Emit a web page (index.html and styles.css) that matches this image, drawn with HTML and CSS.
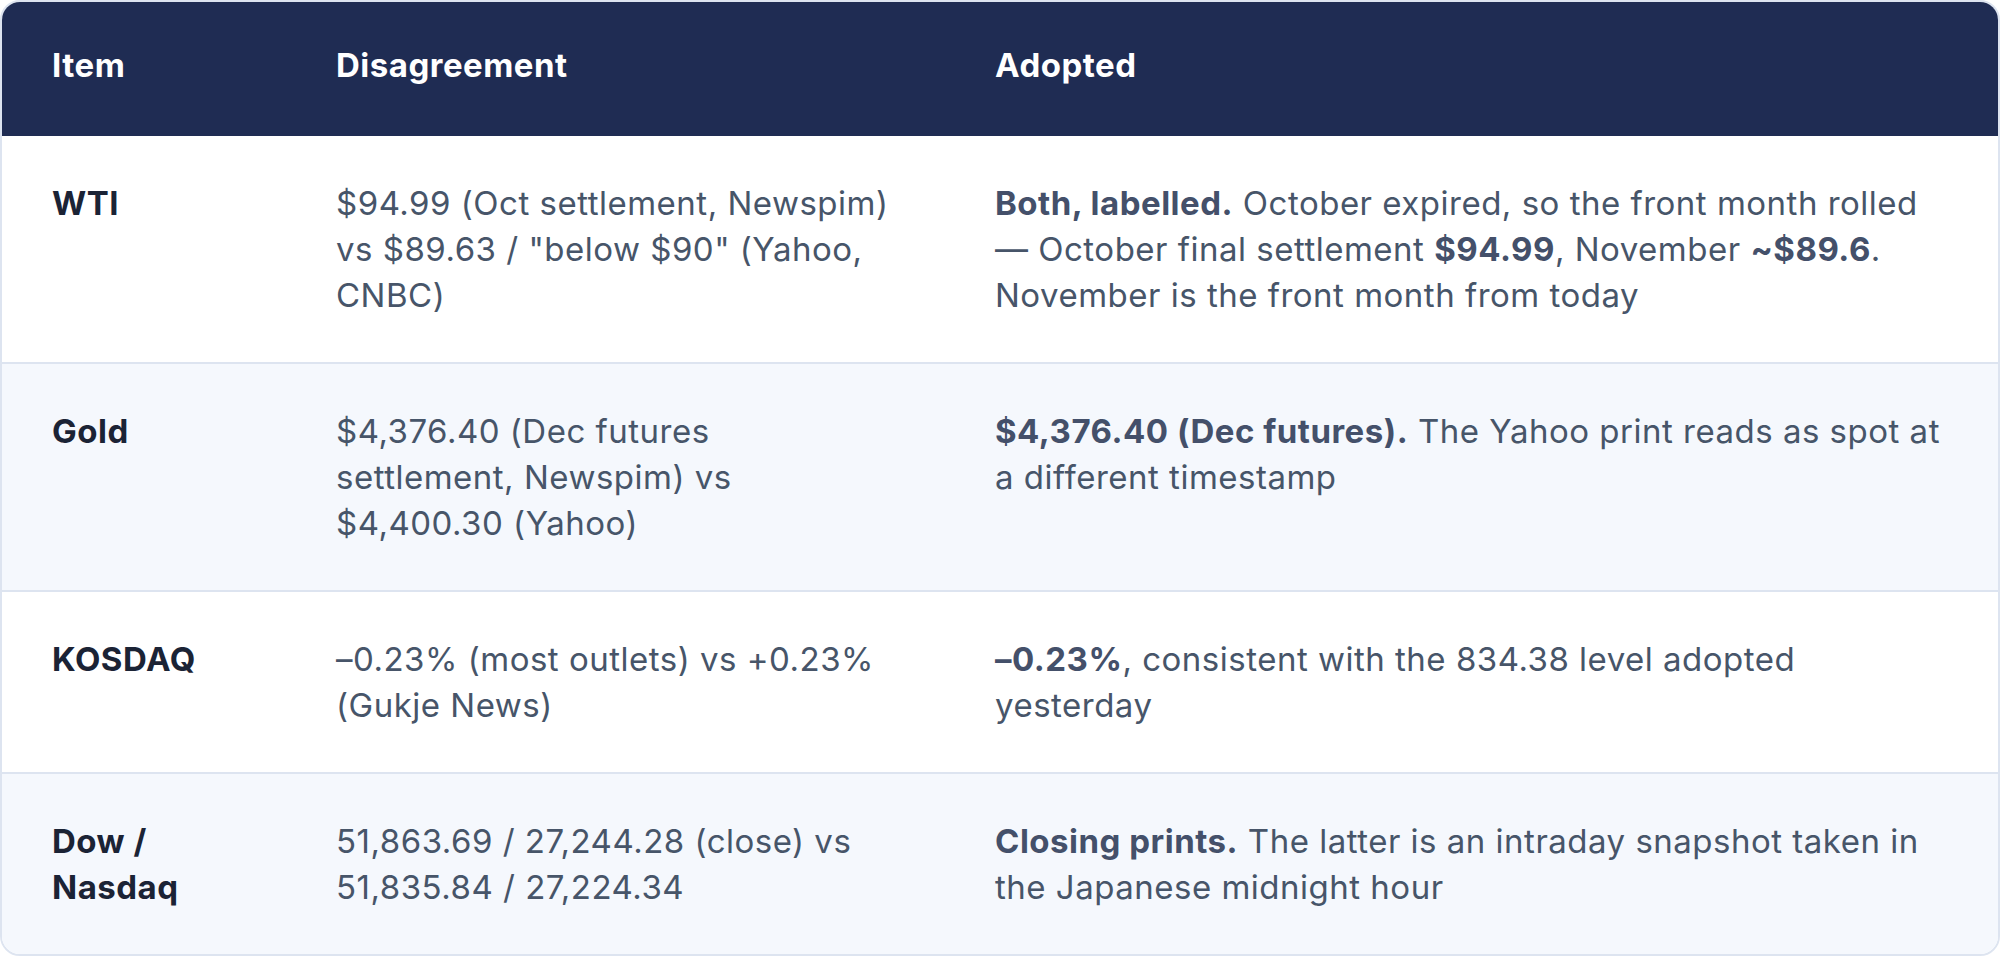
FILE: index.html
```html
<!DOCTYPE html>
<html lang="en">
<head>
<meta charset="utf-8">
<title>Disagreements</title>
<link rel="stylesheet" href="styles.css">
</head>
<body>
<div class="frame">
  <table class="grid">
    <colgroup>
      <col class="c-item">
      <col class="c-dis">
      <col class="c-adopt">
    </colgroup>
    <thead>
      <tr>
        <th>Item</th>
        <th class="dis">Disagreement</th>
        <th class="adopt">Adopted</th>
      </tr>
    </thead>
    <tbody>
      <tr>
        <td class="item">WTI</td>
        <td class="dis">$94.99 (Oct settlement, Newspim) vs $89.63 / "below $90" (Yahoo, CNBC)</td>
        <td class="adopt"><b>Both, labelled.</b> October expired, so the front month rolled — October final settlement <b>$94.99</b>, November <b>~$89.6</b>. November is the front month from today</td>
      </tr>
      <tr class="alt">
        <td class="item">Gold</td>
        <td class="dis">$4,376.40 (Dec futures settlement, Newspim) vs $4,400.30 (Yahoo)</td>
        <td class="adopt"><b>$4,376.40 (Dec futures).</b> The Yahoo print reads as spot at a different timestamp</td>
      </tr>
      <tr>
        <td class="item">KOSDAQ</td>
        <td class="dis">–0.23% (most outlets) vs +0.23% (Gukje News)</td>
        <td class="adopt"><b>–0.23%</b>, consistent with the 834.38 level adopted yesterday</td>
      </tr>
      <tr class="alt">
        <td class="item">Dow / Nasdaq</td>
        <td class="dis">51,863.69 / 27,244.28 (close) vs 51,835.84 / 27,224.34</td>
        <td class="adopt"><b>Closing prints.</b> The latter is an intraday snapshot taken in the Japanese midnight hour</td>
      </tr>
    </tbody>
  </table>
</div>
</body>
</html>
```
FILE: styles.css
```css
html, body {
  margin: 0;
  padding: 0;
  background: #ffffff;
}

body {
  font-family: Inter, "Noto Sans", "Noto Sans CJK KR", sans-serif;
  font-size: 33px;
  line-height: 46px;
  letter-spacing: 0.5px;
  color: #475569;
}

.frame {
  border: 2px solid #dde4f0;
  border-radius: 20px;
  overflow: hidden;
  background: #ffffff;
}

.grid {
  width: 100%;
  border-collapse: separate;
  border-spacing: 0;
  table-layout: fixed;
}

.c-item { width: 284px; }
.c-dis { width: 659px; }
.c-adopt { width: auto; }

.grid th {
  background: #1f2c53;
  color: #ffffff;
  font-weight: 700;
  text-align: left;
  padding: 40px 50px 48px;
}

.grid td {
  vertical-align: top;
  text-align: left;
  padding: 44px 50px;
  border-top: 2px solid #dde4f0;
}

.grid .dis {
  padding-right: 54px;
}

.grid .adopt {
  padding-right: 53px;
}

.grid tbody tr:first-child td {
  border-top: none;
}

.grid tr.alt td {
  background: #f5f8fd;
}

.grid td.item {
  color: #1b2335;
  font-weight: 700;
}

.grid td b {
  font-weight: 700;
  color: #44506a;
}
```
